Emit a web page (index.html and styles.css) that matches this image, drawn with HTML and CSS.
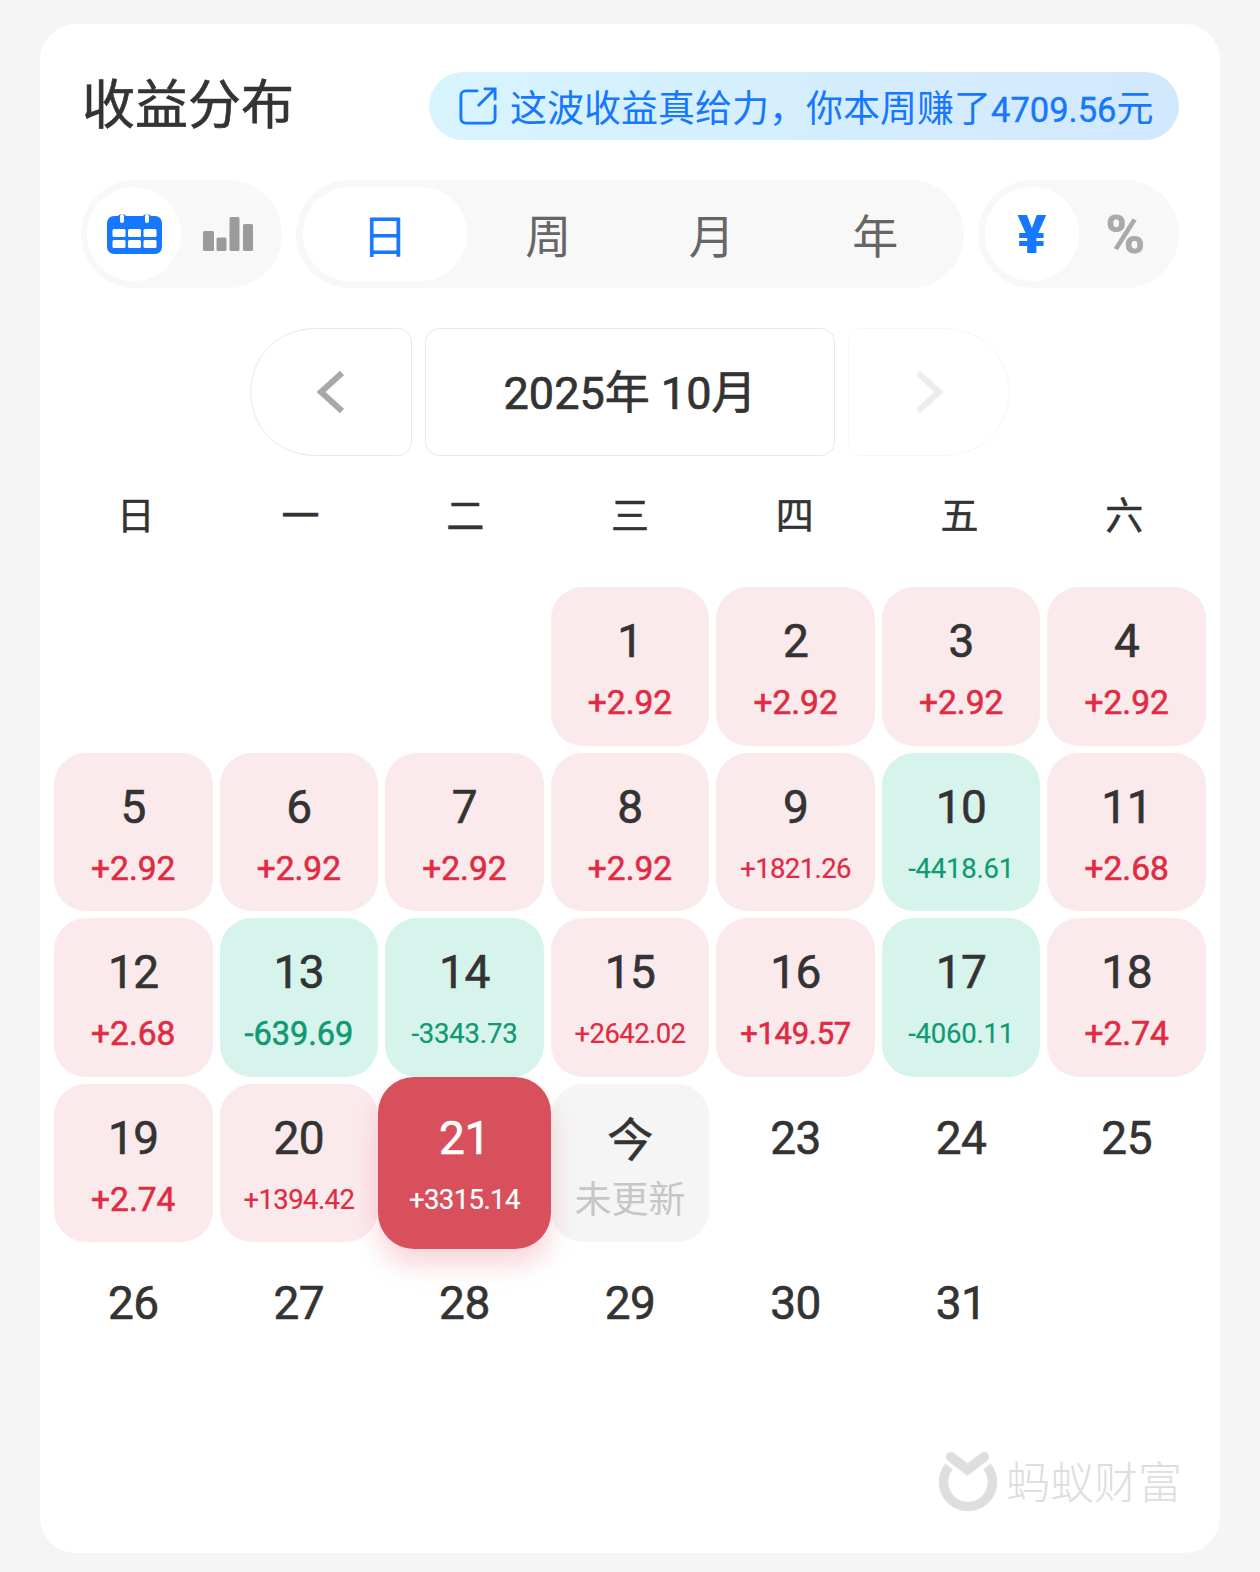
FILE: index.html
```html
<!DOCTYPE html>
<html lang="zh-CN">
<head>
	<title>收益分布</title>
	<meta name="viewport" content="width=device-width, initial-scale=1">
	<link rel="stylesheet" href="styles.css">
</head>
<body>
	<main class="card">
		<header class="head">
			<h1 class="title">收益分布</h1>
			<div class="tip">
				<svg class="tip-icon" viewBox="0 0 40 40" fill="none" stroke="#1677ff" stroke-width="3">
					<path d="M19 4H7a5 5 0 0 0-5 5v24a5 5 0 0 0 5 5h26a5 5 0 0 0 5-5V20" stroke-linecap="round"/>
					<path d="M20 20L37 3M26 2h12v12"/>
				</svg>
				<span>这波收益真给力，你本周赚了<span class="tip-num">4709.56</span>元</span>
			</div>
		</header>

		<div class="controls">
			<div class="seg seg-small">
				<div class="seg-item on">
					<svg class="icon-cal" viewBox="0 0 55 40">
						<rect y="2" width="55" height="38" rx="7" fill="#1677ff"/>
						<rect x="10" y="0" width="10" height="12" rx="5" fill="#1677ff"/>
						<rect x="35" y="0" width="10" height="12" rx="5" fill="#1677ff"/>
						<g fill="#fff">
							<rect x="13" y="0" width="4" height="9" rx="2"/>
							<rect x="38" y="0" width="4" height="9" rx="2"/>
							<rect x="5.500" y="15" width="13" height="8" rx="1.5"/>
							<rect x="21" y="15" width="13" height="8" rx="1.5"/>
							<rect x="36.500" y="15" width="13" height="8" rx="1.5"/>
							<rect x="5.500" y="26" width="13" height="8" rx="1.5"/>
							<rect x="21" y="26" width="13" height="8" rx="1.5"/>
							<rect x="36.500" y="26" width="13" height="8" rx="1.5"/>
						</g>
					</svg>
				</div>
				<div class="seg-item">
					<svg class="icon-bars" viewBox="0 0 50 34" fill="#9b9b9b">
						<rect x="0" y="14" width="11" height="20" rx="1.5"/>
						<rect x="13.500" y="20.500" width="10" height="13.500" rx="1.5"/>
						<rect x="26.500" y="0" width="10" height="34" rx="1.5"/>
						<rect x="40" y="7" width="10" height="27" rx="1.5"/>
					</svg>
				</div>
			</div>
			<div class="seg seg-wide">
				<div class="seg-item on">日</div>
				<div class="seg-item">周</div>
				<div class="seg-item">月</div>
				<div class="seg-item">年</div>
			</div>
			<div class="seg seg-small seg-unit">
				<div class="seg-item on">¥</div>
				<div class="seg-item">%</div>
			</div>
		</div>

		<nav class="month-nav">
			<div class="nav-btn nav-prev">
				<svg class="chev" viewBox="0 0 30 42" fill="none" stroke="#a8a8a8" stroke-width="6"><path d="M26 2L5 21l21 19"/></svg>
			</div>
			<div class="nav-month">2025年 10月</div>
			<div class="nav-btn nav-next">
				<svg class="chev" viewBox="0 0 30 42" fill="none" stroke="#ececec" stroke-width="6"><path d="M4 2l21 19L4 40"/></svg>
			</div>
		</nav>

		<div class="weekdays">
			<div>日</div><div>一</div><div>二</div><div>三</div><div>四</div><div>五</div><div>六</div>
		</div>

		<div class="days">
			<div class="cell"></div>
			<div class="cell"></div>
			<div class="cell"></div>
			<div class="cell up"><div class="num">1</div><div class="val">+2.92</div></div>
			<div class="cell up"><div class="num">2</div><div class="val">+2.92</div></div>
			<div class="cell up"><div class="num">3</div><div class="val">+2.92</div></div>
			<div class="cell up"><div class="num">4</div><div class="val">+2.92</div></div>

			<div class="cell up"><div class="num">5</div><div class="val">+2.92</div></div>
			<div class="cell up"><div class="num">6</div><div class="val">+2.92</div></div>
			<div class="cell up"><div class="num">7</div><div class="val">+2.92</div></div>
			<div class="cell up"><div class="num">8</div><div class="val">+2.92</div></div>
			<div class="cell up"><div class="num">9</div><div class="val long">+1821.26</div></div>
			<div class="cell down"><div class="num">10</div><div class="val long">-4418.61</div></div>
			<div class="cell up"><div class="num">11</div><div class="val">+2.68</div></div>

			<div class="cell up"><div class="num">12</div><div class="val">+2.68</div></div>
			<div class="cell down"><div class="num">13</div><div class="val wide">-639.69</div></div>
			<div class="cell down"><div class="num">14</div><div class="val long">-3343.73</div></div>
			<div class="cell up"><div class="num">15</div><div class="val long">+2642.02</div></div>
			<div class="cell up"><div class="num">16</div><div class="val mid">+149.57</div></div>
			<div class="cell down"><div class="num">17</div><div class="val long">-4060.11</div></div>
			<div class="cell up"><div class="num">18</div><div class="val">+2.74</div></div>

			<div class="cell up"><div class="num">19</div><div class="val">+2.74</div></div>
			<div class="cell up"><div class="num">20</div><div class="val long">+1394.42</div></div>
			<div class="cell picked"><div class="num">21</div><div class="val long">+3315.14</div></div>
			<div class="cell today"><div class="num">今</div><div class="val">未更新</div></div>
			<div class="cell"><div class="num">23</div></div>
			<div class="cell"><div class="num">24</div></div>
			<div class="cell"><div class="num">25</div></div>

			<div class="cell"><div class="num">26</div></div>
			<div class="cell"><div class="num">27</div></div>
			<div class="cell"><div class="num">28</div></div>
			<div class="cell"><div class="num">29</div></div>
			<div class="cell"><div class="num">30</div></div>
			<div class="cell"><div class="num">31</div></div>
		</div>

		<footer class="brand">
			<svg class="brand-logo" viewBox="0 0 60 60" fill="none" stroke="#dedede">
				<path d="M11 14.500a24.500 24.500 0 1 0 38 0" stroke-width="9.500"/>
				<path d="M13 5l16.500 12.500L46 5" stroke-width="10" stroke-linecap="round"/>
			</svg>
			<span class="brand-name">蚂蚁财富</span>
		</footer>
	</main>
</body>
</html>
```

FILE: styles.css
```css
:root {
	--blue: #1677ff;
	--text: #333;
	--seg-bg: #f8f8f8;
	--cjk: "Noto Sans CJK SC", "Noto Sans", sans-serif;
	--digits: Roboto, "Noto Sans CJK SC", sans-serif;
}

html,
body {
	margin: 0;
	padding: 0;
	background: #f5f5f5;
}

body {
	padding: 24px 40px 19px;
	font-family: var(--cjk);
	color: var(--text);
}

.card {
	background: #fff;
	border-radius: 36px;
	padding: 48px 14px 0;
	height: 1529px;
	box-sizing: border-box;
}

.head {
	display: flex;
	justify-content: space-between;
	align-items: flex-start;
	margin: 0 27px 0 28px;
}

.title {
	margin: 0;
	font-size: 53px;
	font-weight: 400;
	-webkit-text-stroke: 0.6px var(--text);
	line-height: 58px;
}

.tip {
	display: flex;
	align-items: center;
	gap: 13px;
	width: 750px;
	height: 68px;
	box-sizing: border-box;
	padding-left: 30px;
	border-radius: 34px;
	background: linear-gradient(90deg, #d7f4fe, #d2e8fd);
	color: var(--blue);
	font-size: 37px;
	white-space: nowrap;
}

.tip-icon { width: 38px; height: 38px; flex: none; }
.tip-num { font: 400 34.5px var(--digits); -webkit-text-stroke: 0.4px var(--blue); }

.controls {
	display: flex;
	gap: 14px;
	margin: 40px 27px 0;
}

.seg {
	display: flex;
	height: 108px;
	box-sizing: border-box;
	padding: 7px;
	border-radius: 54px;
	background: var(--seg-bg);
}
.seg-small { width: 201px; padding-left: 6px; }
.seg-wide { width: 668px; color: #666; font-size: 46px; }
.seg-wide .seg-item { padding-bottom: 2px; box-sizing: border-box; }

.seg-item {
	flex: 1;
	display: flex;
	align-items: center;
	justify-content: center;
	border-radius: 47px;
}
.seg-item.on { background: #fff; color: var(--blue); }

.icon-cal { width: 55px; height: 40px; }
.icon-bars { width: 50px; height: 34px; }

.seg-unit { padding: 7px; font: 900 54px var(--digits); color: #aaa; }
.seg-unit .on { color: var(--blue); }

.month-nav {
	display: flex;
	justify-content: center;
	gap: 13px;
	margin-top: 40px;
}

.nav-btn,
.nav-month {
	display: flex;
	align-items: center;
	justify-content: center;
	height: 128px;
	box-sizing: border-box;
	border: 1px solid #e8e8e8;
}
.nav-btn { width: 162px; }
.nav-prev { border-radius: 64px 14px 14px 64px; }
.nav-next { border-radius: 14px 64px 64px 14px; border-color: #f6f6f6; }
.nav-month {
	width: 410px;
	border-radius: 14px;
	padding-bottom: 6px;
	font: 400 45px var(--digits);
	-webkit-text-stroke: 0.7px var(--text);
}
.chev { width: 30px; height: 42px; }

.weekdays {
	display: grid;
	grid-template-columns: repeat(7, 1fr);
	gap: 7px;
	margin: 30px 3px 0;
	height: 66px;
	line-height: 54px;
	text-align: center;
	font-size: 38px;
	-webkit-text-stroke: 0.5px var(--text);
}

.days {
	display: grid;
	grid-template-columns: repeat(7, 1fr);
	gap: 7px;
	margin-top: 35px;
}

.cell {
	aspect-ratio: 1;
	box-sizing: border-box;
	display: flex;
	flex-direction: column;
	align-items: center;
	padding-top: 27px;
	border-radius: 32px;
	min-width: 0;
}
.up { background: #fbeaec; color: #e02b42; }
.down { background: #d7f4ec; color: #0f9a73; }
.today { background: #f5f5f5; color: #c6c6c6; }
.picked {
	aspect-ratio: auto;
	margin: -7px;
	padding-top: 34px;
	background: #d9505d;
	color: #fff;
	position: relative;
	border-radius: 36px;
	box-shadow: 0 16px 26px rgba(224, 70, 90, 0.22);
}

.num {
	font: 400 46px/54px var(--digits);
	letter-spacing: -0.5px;
	color: var(--text);
	-webkit-text-stroke: 0.6px currentColor;
}
.picked .num { color: #fff; }
.today .num { margin-top: -2px; font: 400 46px/54px var(--cjk); }

.val {
	margin-top: 15px;
	font: 400 33.5px/40px var(--digits);
	-webkit-text-stroke: 0.6px currentColor;
	white-space: nowrap;
}
.val.wide { font-size: 32.5px; }
.val.mid { font-size: 31px; letter-spacing: -0.3px; }
.val.long { font-size: 27.5px; letter-spacing: -0.6px; -webkit-text-stroke: 0.2px currentColor; }
.down .val.long { letter-spacing: -0.2px; }
.today .val { margin-top: 14px; font: 400 37px/40px var(--cjk); -webkit-text-stroke: 0; }

.brand {
	display: flex;
	justify-content: flex-end;
	align-items: center;
	gap: 8px;
	margin: 44px 24px 0 0;
	color: #dedede;
	font-size: 44px;
	font-weight: 300;
}
.brand-logo { width: 60px; height: 60px; }
.brand-name { margin-top: -4px; }
```
